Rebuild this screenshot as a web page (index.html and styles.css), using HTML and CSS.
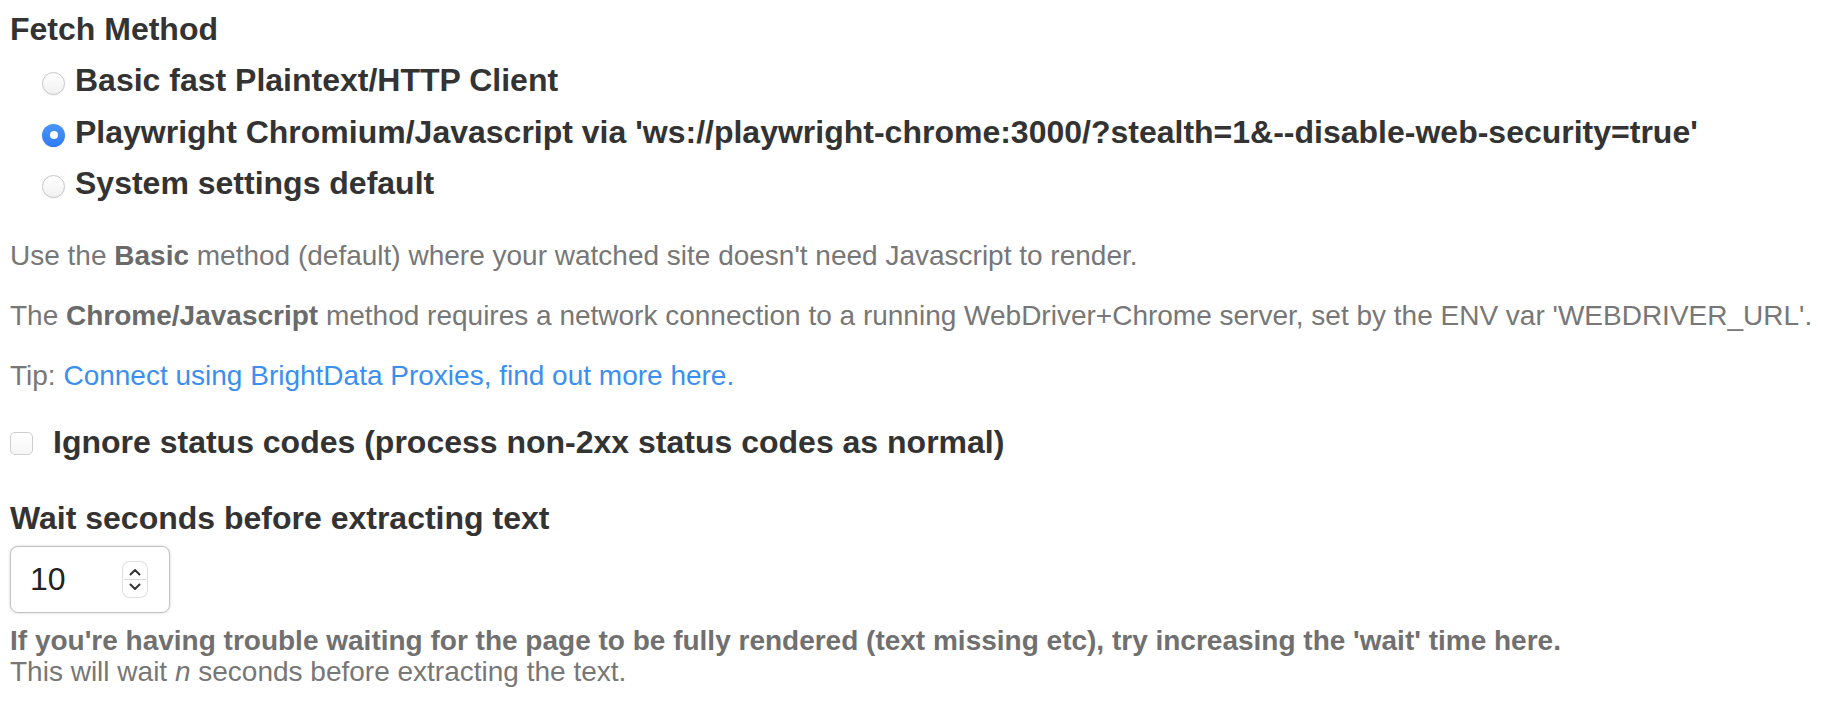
FILE: index.html
```html
<!DOCTYPE html>
<html>
<head>
<meta charset="utf-8">
<link rel="stylesheet" href="styles.css">
</head>
<body>
<div class="page">
  <fieldset class="group">
    <div class="group-title">Fetch Method</div>
    <ul class="radio-list">
      <li><label class="radio-row"><span class="radio"></span>Basic fast Plaintext/HTTP Client</label></li>
      <li><label class="radio-row"><span class="radio checked"></span>Playwright Chromium/Javascript via 'ws://playwright-chrome:3000/?stealth=1&amp;--disable-web-security=true'</label></li>
      <li><label class="radio-row"><span class="radio"></span>System settings default</label></li>
    </ul>
    <p class="help">Use the <strong>Basic</strong> method (default) where your watched site doesn't need Javascript to render.</p>
    <p class="help">The <strong>Chrome/Javascript</strong> method requires a network connection to a running WebDriver+Chrome server, set by the ENV var 'WEBDRIVER_URL'.</p>
    <p class="help">Tip: <a class="link" href="#">Connect using BrightData Proxies, find out more here.</a></p>
  </fieldset>

  <div class="check-row">
    <span class="checkbox"></span><label class="check-label">Ignore status codes (process non-2xx status codes as normal)</label>
  </div>

  <div class="field">
    <div class="field-title">Wait seconds before extracting text</div>
    <div class="number-input">
      <span class="number-value">10</span>
      <span class="spinner">
        <svg width="24" height="35" viewBox="0 0 24 35">
          <path d="M7.5 12.5 L12 8 L16.5 12.5" fill="none" stroke="#333" stroke-width="2" stroke-linecap="round" stroke-linejoin="round"/>
          <line x1="1" y1="17.5" x2="23" y2="17.5" stroke="#d8d8d8" stroke-width="1"/>
          <path d="M7.5 22.5 L12 27 L16.5 22.5" fill="none" stroke="#333" stroke-width="2" stroke-linecap="round" stroke-linejoin="round"/>
        </svg>
      </span>
    </div>
    <div class="field-help">
      <strong>If you're having trouble waiting for the page to be fully rendered (text missing etc), try increasing the 'wait' time here.</strong><br>
      This will wait <i>n</i> seconds before extracting the text.
    </div>
  </div>
</div>
</body>
</html>
```

FILE: styles.css
```css
html, body {
  margin: 0;
  padding: 0;
  background: #ffffff;
}

body {
  font-family: "Liberation Sans", Arial, Helvetica, sans-serif;
  color: #333333;
}

.page {
  padding: 11px 0 0 10px;
}

.group {
  border: 0;
  margin: 0;
  padding: 0;
}

.group-title,
.field-title {
  font-size: 32px;
  font-weight: bold;
  line-height: 36px;
  color: #333333;
}

.radio-list {
  list-style: none;
  margin: 8px 0 0 0;
  padding: 0 0 0 32px;
}

.radio-row {
  display: block;
  font-size: 32px;
  font-weight: bold;
  line-height: 51.6px;
  white-space: nowrap;
  color: #333333;
}

.radio {
  display: inline-block;
  box-sizing: border-box;
  width: 23px;
  height: 23px;
  border-radius: 50%;
  border: 1px solid #c6c6c6;
  background: linear-gradient(#ffffff, #f1f1f1);
  box-shadow: 0 0.5px 1px rgba(0, 0, 0, 0.08);
  vertical-align: -4px;
  margin-right: 10px;
  position: relative;
}

.radio.checked {
  border: 0;
  background: linear-gradient(#4a94f8, #2f7cf6);
}

.radio.checked::after {
  content: "";
  position: absolute;
  left: 7.5px;
  top: 7.5px;
  width: 8px;
  height: 8px;
  border-radius: 50%;
  background: #ffffff;
}

.help {
  margin: 0;
  font-size: 28px;
  line-height: 32px;
  color: #777777;
  white-space: nowrap;
}

.radio-list + .help {
  margin-top: 30px;
}

.help + .help {
  margin-top: 28px;
}

.help strong {
  color: #6a6a6a;
}

.link {
  color: #3b8ff0;
  text-decoration: none;
}

.check-row {
  margin-top: 30px;
  font-size: 32px;
  font-weight: bold;
  line-height: 40px;
  white-space: nowrap;
}

.checkbox {
  display: inline-block;
  box-sizing: border-box;
  width: 23px;
  height: 23px;
  border: 1px solid #cfcfcf;
  border-radius: 5px;
  background: linear-gradient(#ffffff, #f6f6f6);
  vertical-align: -2px;
  margin-right: 20px;
}

.check-label {
  color: #333333;
}

.field {
  margin-top: 38px;
}

.number-input {
  margin-top: 10px;
  box-sizing: border-box;
  width: 160px;
  height: 67px;
  border: 1px solid #c4c4c4;
  border-radius: 8px;
  box-shadow: 0 0 3px rgba(0, 0, 0, 0.18);
  display: flex;
  align-items: center;
  padding: 0 22px 0 19px;
  background: #ffffff;
}

.number-value {
  flex: 1;
  font-size: 32px;
  color: #222222;
}

.spinner {
  display: flex;
  box-sizing: border-box;
  width: 24px;
  height: 35px;
  border-radius: 7px;
  box-shadow: 0 0 0 1px #e0e0e0;
  background: #ffffff;
}

.field-help {
  margin-top: 12px;
  font-size: 28px;
  line-height: 31px;
  color: #777777;
  white-space: nowrap;
}

.field-help strong {
  color: #707070;
}
```
